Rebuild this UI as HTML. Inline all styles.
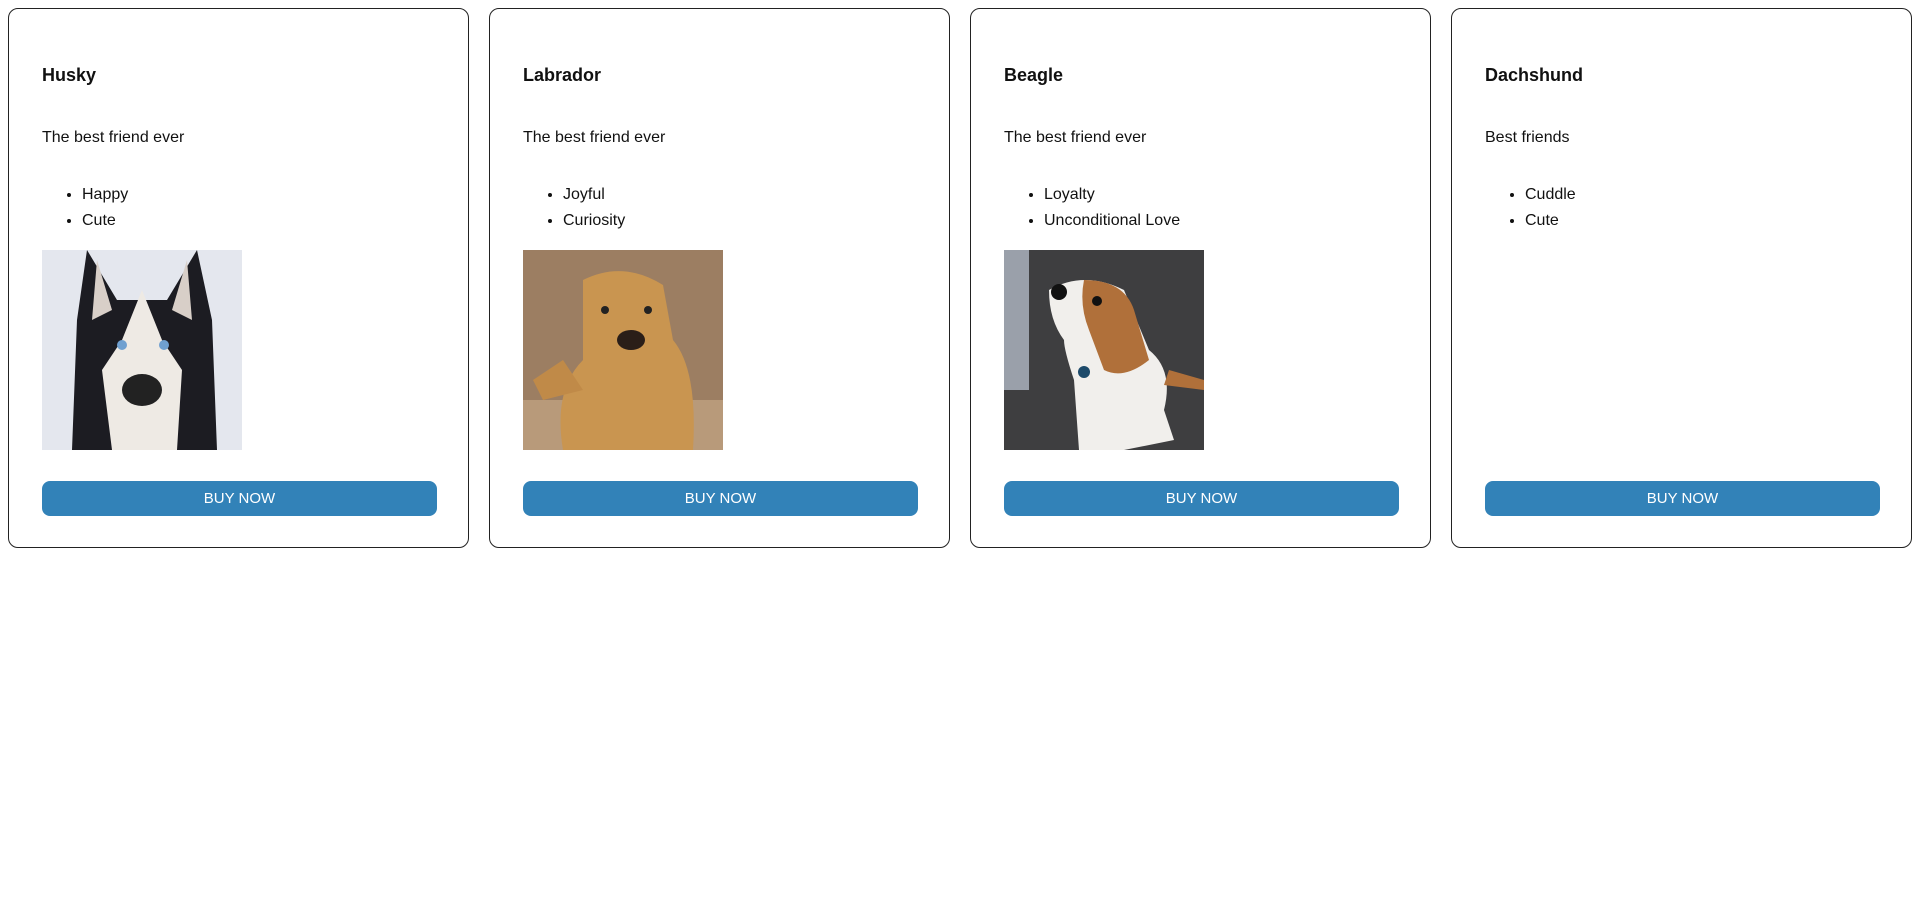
<!DOCTYPE html>
<html><head><meta charset="utf-8"><style>
*{box-sizing:border-box}
body{margin:0;width:1920px;height:910px;background:#fff;font-family:"Liberation Sans",sans-serif;color:#111;position:relative;overflow:hidden}
.card{position:absolute;top:8px;width:461px;height:540px;border:1.5px solid #222;border-radius:10px}
.t{position:absolute;left:33px;top:56px;font-size:18px;font-weight:bold}
.d{position:absolute;left:33px;top:120px;font-size:16px}
ul{position:absolute;left:33px;top:173px;margin:0;padding-left:40px;font-size:16px;line-height:26px}
.img{position:absolute;left:33px;top:241px;width:200px;height:200px;overflow:hidden}
.b{position:absolute;left:33px;top:472px;width:395px;height:35px;background:#3282b8;border-radius:8px;color:#fff;font-size:15px;text-align:center;line-height:35px}
</style></head><body>
<div class="card" style="left:8px"><div class="t">Husky</div><div class="d">The best friend ever</div><ul><li>Happy</li><li>Cute</li></ul>
<div class="img"><svg width="200" height="200"><rect width="200" height="200" fill="#e4e7ee"/><path d="M45 0 L75 50 L125 50 L155 0 L170 70 L175 200 L30 200 L35 70Z" fill="#1c1c22"/><path d="M55 10 L70 60 L50 70Z M145 10 L130 60 L150 70Z" fill="#d8cfc8"/><path d="M100 40 L80 90 L60 120 L70 200 L135 200 L140 120 L120 90Z" fill="#eeeae4"/><ellipse cx="100" cy="140" rx="20" ry="16" fill="#222"/><circle cx="80" cy="95" r="5" fill="#6fa0d0"/><circle cx="122" cy="95" r="5" fill="#6fa0d0"/></svg></div>
<div class="b">BUY NOW</div></div>
<div class="card" style="left:489px"><div class="t">Labrador</div><div class="d">The best friend ever</div><ul><li>Joyful</li><li>Curiosity</li></ul>
<div class="img"><svg width="200" height="200"><rect width="200" height="200" fill="#9c7e62"/><rect y="150" width="200" height="50" fill="#b89a7a"/><path d="M60 30 Q100 10 140 35 L150 90 Q175 120 170 200 L40 200 Q30 140 60 110Z" fill="#c99550"/><path d="M40 110 L10 130 L20 150 L60 140Z" fill="#c08a48"/><ellipse cx="108" cy="90" rx="14" ry="10" fill="#2a1e18"/><circle cx="82" cy="60" r="4" fill="#222"/><circle cx="125" cy="60" r="4" fill="#222"/></svg></div>
<div class="b">BUY NOW</div></div>
<div class="card" style="left:970px"><div class="t">Beagle</div><div class="d">The best friend ever</div><ul><li>Loyalty</li><li>Unconditional Love</li></ul>
<div class="img"><svg width="200" height="200"><rect width="200" height="200" fill="#3e3e40"/><rect width="25" height="140" fill="#9aa0aa"/><path d="M45 40 Q80 20 120 40 L145 100 Q170 120 160 160 L170 190 L120 200 L75 200 L70 130 Q60 100 60 90 Q45 70 45 40Z" fill="#f1efec"/><path d="M80 30 Q120 30 130 60 L145 110 Q120 130 100 120 L85 80 Q75 55 80 30Z" fill="#b0703a"/><path d="M165 120 L200 130 L200 140 L160 135Z" fill="#b0703a"/><circle cx="55" cy="42" r="8" fill="#111"/><circle cx="93" cy="51" r="5" fill="#111"/><circle cx="80" cy="122" r="6" fill="#1d4a6a"/></svg></div>
<div class="b">BUY NOW</div></div>
<div class="card" style="left:1451px"><div class="t">Dachshund</div><div class="d">Best friends</div><ul><li>Cuddle</li><li>Cute</li></ul>
<div class="b">BUY NOW</div></div>
</body></html>
